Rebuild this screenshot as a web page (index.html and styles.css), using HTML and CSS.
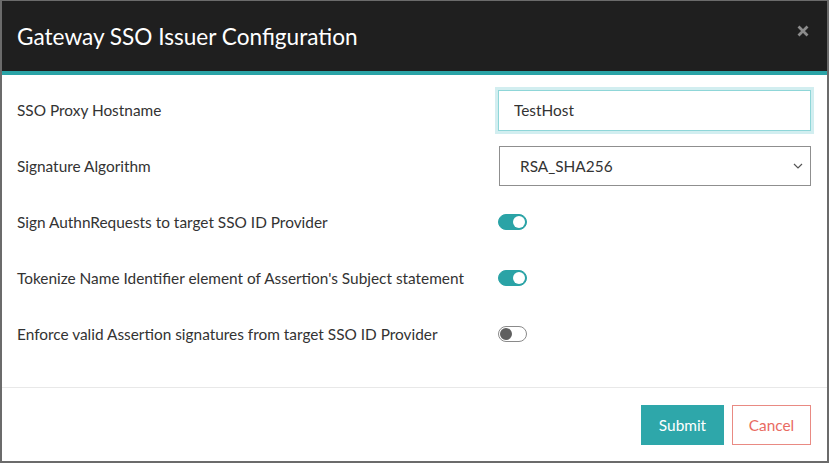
FILE: index.html
```html
<!DOCTYPE html>
<html lang="en">
<head>
    <meta charset="UTF-8">
    <title>Gateway SSO Issuer Configuration</title>
    <link rel="stylesheet" href="styles.css">
</head>
<body>
    <div class="modal">
        <div class="modal-header">
            <h2>Gateway SSO Issuer Configuration</h2>
            <svg class="close" width="12" height="12" viewBox="0 0 12 12"><path d="M1.5 1.5l9 9M10.5 1.5l-9 9" stroke="#8c8c8c" stroke-width="2.8"/></svg>
        </div>
        <div class="modal-body">
            <div class="form-row">
                <label for="hostname">SSO Proxy Hostname</label>
                <input type="text" id="hostname" class="text-input focused" value="TestHost">
            </div>
            <div class="form-row">
                <label for="algorithm">Signature Algorithm</label>
                <div class="select-wrap">
                    <select id="algorithm" class="select-input">
                        <option>RSA_SHA256</option>
                        <option>RSA_SHA1</option>
                    </select>
                    <svg class="chevron" width="10" height="6" viewBox="0 0 10 6"><path d="M1 1l4 4 4-4" fill="none" stroke="#555" stroke-width="1.2"/></svg>
                </div>
            </div>
            <div class="form-row">
                <label>Sign AuthnRequests to target SSO ID Provider</label>
                <span class="toggle on"><span class="knob"></span></span>
            </div>
            <div class="form-row">
                <label>Tokenize Name Identifier element of Assertion's Subject statement</label>
                <span class="toggle on"><span class="knob"></span></span>
            </div>
            <div class="form-row">
                <label>Enforce valid Assertion signatures from target SSO ID Provider</label>
                <span class="toggle"><span class="knob"></span></span>
            </div>
        </div>
        <div class="modal-footer">
            <button class="btn btn-primary">Submit</button>
            <button class="btn btn-cancel">Cancel</button>
        </div>
    </div>
</body>
</html>
```

FILE: styles.css
```css
body { margin: 0; font-family: Lato, "Open Sans", sans-serif; background: #fff; }
.modal { width: 829px; height: 463px; box-sizing: border-box; border: 2px solid #6b6b6b; border-top-width: 1px; display: flex; flex-direction: column; background: #fff; }
.modal-header { height: 70px; background: #1f1f1f; border-bottom: 4px solid #2aa3a6; display: flex; align-items: center; justify-content: space-between; padding: 0 18px 0 15px; box-sizing: content-box; }
.modal-header h2 { margin: 0; color: #fff; font-weight: normal; font-size: 22.6px; }
.close { margin-top: -10px; }
.modal-body { padding: 7px 16px 0 15px; height: 305px; border-bottom: 1px solid #e8e8e8; }
.form-row { display: flex; align-items: center; justify-content: space-between; height: 56px; }
.form-row label { color: #333; font-size: 15.4px; }
.text-input { width: 313px; height: 41px; box-sizing: border-box; border: 1px solid #8fd6d8; padding: 0 15px; font-family: inherit; font-size: 15.4px; color: #333; }
.text-input.focused { outline: none; box-shadow: 0 0 0 3px #d2eef0; }
.select-wrap { position: relative; width: 312px; height: 40px; }
.select-input { width: 100%; height: 100%; appearance: none; border: 1px solid #8f8f8f; background: #fff; padding: 0 20px; font-family: inherit; font-size: 15.4px; color: #333; }
.chevron { position: absolute; right: 8px; top: 17px; }
.toggle { width: 29px; height: 16px; border-radius: 8px; background: #fff; border: 1.5px solid #8a8a8a; box-sizing: border-box; margin-right: 284px; display: flex; align-items: center; padding: 0 1px; }
.toggle .knob { width: 12px; height: 12px; border-radius: 50%; background: #5f5f5f; }
.toggle.on { background: #2aa3a6; border-color: #2aa3a6; justify-content: flex-end; }
.toggle.on .knob { background: #fff; }
.modal-footer { flex: 1; display: flex; justify-content: flex-end; align-items: center; gap: 8px; padding: 0 16px 0 0; }
.btn { height: 40px; font-family: inherit; font-size: 15.4px; cursor: pointer; }
.btn-primary { width: 83px; background: #2ea7aa; color: #fff; border: none; }
.btn-cancel { width: 79px; background: #fff; color: #e96b62; border: 1px solid #e98a83; }
```
